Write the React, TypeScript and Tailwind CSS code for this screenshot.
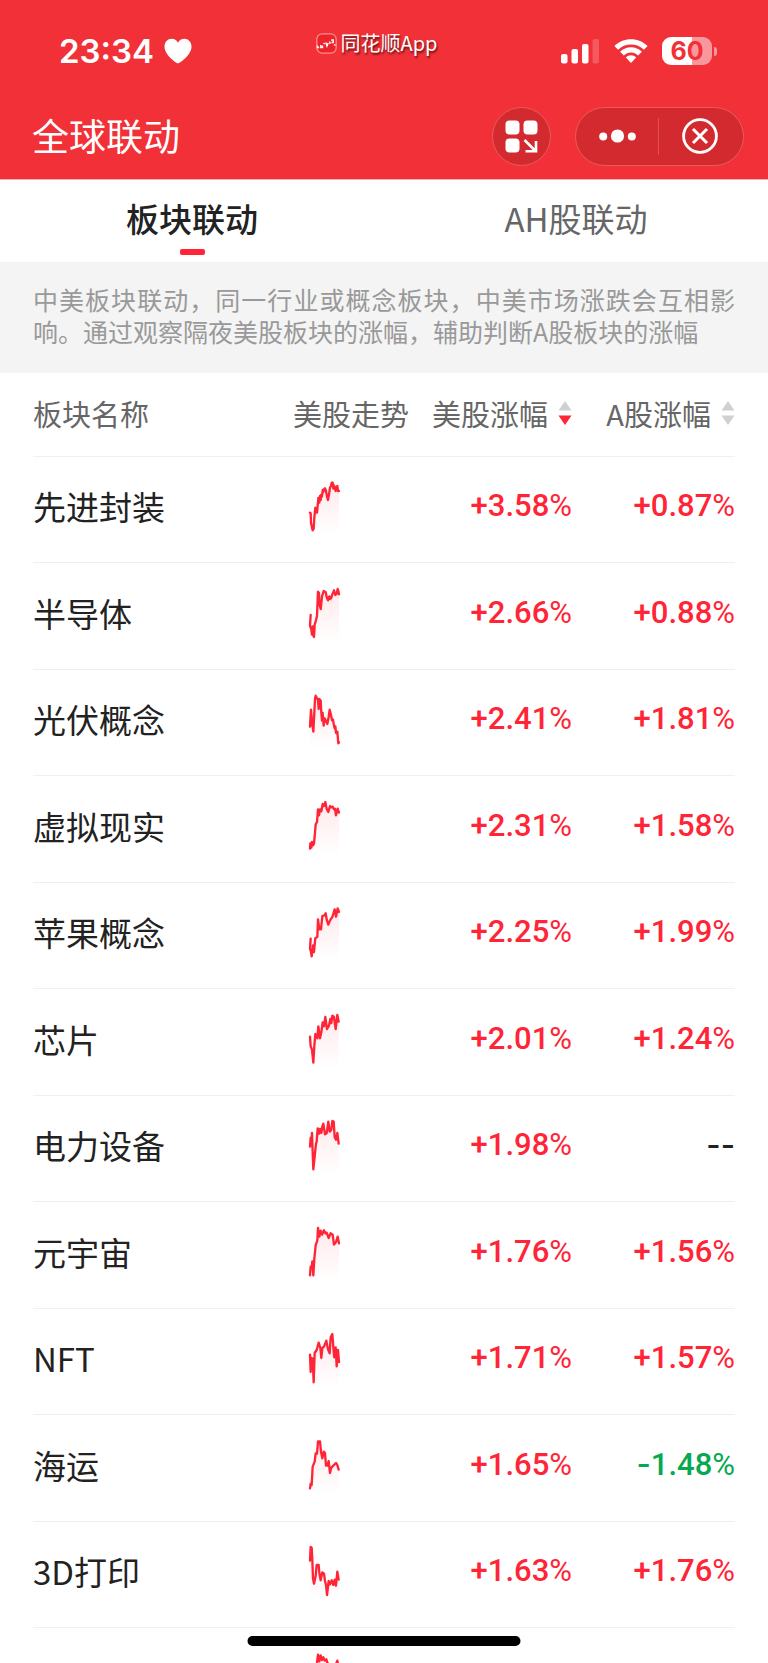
import React from 'react';
import clsx from 'clsx';

interface Sector {
  name: string;
  us: string;
  cn: string;
  trend: string;
}

const SECTORS: Sector[] = [
  {
    name: '先进封装',
    us: '+3.58%',
    cn: '+0.87%',
    trend: '6,110 8,112 9,140 12,155 14,163 17,158 19,125 22,95 24,98 27,110 29,90 31,66 34,80 36,60 38,72 40,56 42,62 44,42 46,48 48,40 51,37 54,45 57,62 60,72 63,55 66,35 69,30 71,20 74,20 76,38 78,28 81,38 83,45 86,32 88,30 90,45 93,45',
  },
  {
    name: '半导体',
    us: '+2.66%',
    cn: '+0.88%',
    trend: '8,96 6,128 10,140 12,155 14,130 16,158 18,162 20,125 24,112 27,98 30,26 33,30 34,60 38,78 40,60 42,40 47,24 53,28 56,42 60,52 64,40 67,48 70,44 73,34 78,22 82,36 86,32 89,18 91,24 93,34',
  },
  {
    name: '光伏概念',
    us: '+2.41%',
    cn: '+1.81%',
    trend: '6,113 9,62 12,100 16,128 19,70 21,30 23,20 26,26 30,33 32,60 34,30 38,35 40,72 42,95 44,72 47,110 50,88 54,96 58,105 62,84 65,62 69,78 72,94 75,92 78,110 80,118 82,112 84,132 88,128 91,163 93,160',
  },
  {
    name: '虚拟现实',
    us: '+2.31%',
    cn: '+1.58%',
    trend: '6,158 7,142 10,155 12,138 15,148 18,143 21,110 23,85 27,78 30,40 33,58 36,40 40,46 44,24 48,30 52,18 56,38 61,48 66,30 70,34 74,32 78,40 81,38 84,58 89,38 93,50',
  },
  {
    name: '苹果概念',
    us: '+2.25%',
    cn: '+1.99%',
    trend: '8,110 6,140 9,150 11,163 15,130 18,150 22,108 28,105 30,52 34,82 39,82 43,42 49,40 53,34 56,52 61,68 66,55 73,45 80,22 84,44 89,19 93,30',
  },
  {
    name: '芯片',
    us: '+2.01%',
    cn: '+1.24%',
    trend: '6,83 8,112 12,122 16,161 19,110 22,75 28,88 31,52 36,88 40,70 44,40 48,52 52,24 57,60 63,50 67,30 70,42 73,20 78,24 80,40 83,60 88,18 92,38',
  },
  {
    name: '电力设备',
    us: '+1.98%',
    cn: '--',
    trend: '6,95 8,68 10,85 12,54 14,110 16,163 20,125 24,86 26,80 29,40 33,56 36,42 40,54 43,34 46,26 51,58 56,55 61,20 65,50 70,44 73,18 77,20 80,66 84,74 88,54 92,86',
  },
  {
    name: '元宇宙',
    us: '+1.76%',
    cn: '+1.56%',
    trend: '6,160 8,134 11,138 13,118 16,160 19,110 23,70 28,55 30,18 34,44 38,26 42,38 48,25 52,34 56,32 62,48 68,34 74,38 78,68 84,60 89,44 93,64',
  },
  {
    name: 'NFT',
    us: '+1.71%',
    cn: '+1.57%',
    trend: '6,80 8,132 10,90 14,92 17,163 20,75 26,66 32,44 37,60 40,90 43,60 48,56 55,38 60,64 65,76 68,28 73,18 77,70 79,88 83,58 86,115 90,66 93,102',
  },
  {
    name: '海运',
    us: '+1.65%',
    cn: '-1.48%',
    trend: '6,160 8,146 11,150 14,95 20,80 23,55 27,56 30,19 36,19 39,50 43,70 47,50 51,54 54,92 58,92 62,78 66,114 70,98 76,92 84,84 88,90 92,104',
  },
  {
    name: '3D打印',
    us: '+1.63%',
    cn: '+1.76%',
    trend: '6,59 8,18 11,20 13,56 15,112 18,128 23,104 26,72 32,72 34,96 38,118 43,94 48,98 51,120 54,132 57,162 62,120 66,130 71,118 76,132 80,116 84,134 88,92 92,116',
  },
  {
    name: '',
    us: '',
    cn: '',
    trend: '6,100 16,130 22,80 27,44 30,20 34,40 38,22 42,36 46,28 50,38 55,34 58,44 70,60 80,60 88,38 93,60',
  },
];

const changeColor = (value: string) => {
  if (value.startsWith('+')) return 'text-[#ff2436]';
  if (value === '--') return 'text-[#222222]';
  return 'text-[#07a850]';
};

const Change: React.FC<{ value: string }> = ({ value }) => {
  const dashes = value.match(/^-+/)?.[0] ?? '';
  return (
    <span className={clsx("font-['Roboto',sans-serif] text-[31px] leading-9 font-medium", changeColor(value))}>
      {/* Roboto's hyphen is too short for a minus sign */}
      {dashes && <span className="font-['Inter',sans-serif]">{dashes}</span>}
      {value.slice(dashes.length).replace('%', '')}
      {value.endsWith('%') && <span className="font-normal">%</span>}
    </span>
  );
};

const Sparkline: React.FC<{ points: string }> = ({ points }) => (
  <svg viewBox="0 0 102 198" className="ml-[15px] block h-[66px] w-[34px]" aria-hidden="true">
    <defs>
      <linearGradient id="trend-fill" gradientUnits="userSpaceOnUse" x1="0" y1="18" x2="0" y2="176">
        <stop offset="0" stopColor="#ff2436" stopOpacity="0.1" />
        <stop offset="1" stopColor="#ff2436" stopOpacity="0" />
      </linearGradient>
    </defs>
    <polygon points={`6,176 ${points} 93,176`} fill="url(#trend-fill)" />
    <polyline
      points={points}
      fill="none"
      stroke="#ff2436"
      strokeWidth="7"
      strokeLinejoin="round"
      strokeLinecap="round"
    />
  </svg>
);

const SortArrows: React.FC<{ active?: boolean }> = ({ active }) => (
  <svg viewBox="0 0 14 26" className="h-[26px] w-[14px]" aria-hidden="true">
    <path d="M7 1 L13.5 10.5 H0.5 Z" fill="#d0d0d0" />
    <path d="M7 25 L13.5 15.5 H0.5 Z" fill={active ? '#ff2436' : '#d0d0d0'} />
  </svg>
);

const StatusBar: React.FC = () => (
  <div className="flex h-[102px] items-center justify-between pr-[51px] pl-[59px]">
    <div className="flex items-center gap-[10px]">
      <span className="font-['Inter',sans-serif] text-[33px] leading-10 font-semibold">23:34</span>
      <svg viewBox="0 0 28 26" className="h-[26px] w-7" aria-hidden="true">
        <path
          d="M14 25.5 C12.5 25.2 0.5 17.5 0.5 8.6 C0.5 4 3.8 0.8 7.6 0.8 C10.4 0.8 12.8 2.3 14 4.8 C15.2 2.3 17.6 0.8 20.4 0.8 C24.2 0.8 27.5 4 27.5 8.6 C27.5 17.5 15.5 25.2 14 25.5 Z"
          fill="#fff"
        />
      </svg>
    </div>

    <div className="mb-4 flex items-center gap-1">
      <svg viewBox="0 0 21 21" className="size-[21px]" aria-hidden="true">
        <rect x="0.8" y="0.8" width="19.4" height="19.4" rx="5.5" fill="#ee2229" stroke="#fa8f92" strokeWidth="1.3" />
        <path
          d="M1.5 12.5 V14.5 H3.2 M4.8 12 V14.5 H6.5 V12.5 M7.5 10 L8.8 11 M9.8 9.5 L11 13 L12.2 10 M13.5 8.5 L14.2 11 M15.2 7 H17.2 V9.5 H15.5 M18 11.5 L19.5 12.5"
          fill="none"
          stroke="#fff"
          strokeWidth="1.4"
        />
      </svg>
      <span className="text-[20px] leading-6 text-shadow-[1px_2px_2px_rgba(0,0,0,0.6)]">同花顺App</span>
    </div>

    <div className="flex items-center">
      <svg viewBox="0 0 39 25" className="h-[25px] w-[39px]" aria-hidden="true">
        <rect x="0" y="15" width="6.5" height="9.5" rx="2" fill="#fff" />
        <rect x="10.5" y="10" width="6.5" height="14.5" rx="2" fill="#fff" />
        <rect x="21" y="5" width="6.5" height="19.5" rx="2" fill="#fff" />
        <rect x="31.5" y="0" width="6.5" height="24.5" rx="2" fill="#fff" fillOpacity="0.2" />
      </svg>
      <svg viewBox="0 0 34 25" className="ml-[14px] h-[25px] w-[34px]" aria-hidden="true">
        <path d="M17 0.3 C23.5 0.3 29.3 2.8 33.6 7 L29.9 10.8 C26.5 7.5 22 5.6 17 5.6 C12 5.6 7.5 7.5 4.1 10.8 L0.4 7 C4.7 2.8 10.5 0.3 17 0.3 Z" fill="#fff" />
        <path d="M17 8.3 C21.2 8.3 25 9.9 27.9 12.7 L24.1 16.5 C22.2 14.7 19.8 13.6 17 13.6 C14.2 13.6 11.8 14.7 9.9 16.5 L6.1 12.7 C9 9.9 12.8 8.3 17 8.3 Z" fill="#fff" />
        <path d="M17 16.2 C19 16.2 20.8 17 22.1 18.4 L17 24 L11.9 18.4 C13.2 17 15 16.2 17 16.2 Z" fill="#fff" />
      </svg>
      <div className="ml-[14px] flex items-center gap-[2px]">
        <div className="flex h-7 w-[50px] items-center justify-center rounded-[9px] bg-linear-to-r from-white from-60% to-[#f9989c] to-60%">
          <span className="font-['Inter',sans-serif] text-[25px] leading-7 font-bold text-[#f23037]">60</span>
        </div>
        <div className="h-[9px] w-[3px] rounded-r-full bg-[#f9989c]" />
      </div>
    </div>
  </div>
);

const TitleBar: React.FC = () => (
  <div className="flex h-[68px] items-center justify-between pr-6 pl-8">
    <h1 className="pb-[2px] text-[37px] leading-[48px]">全球联动</h1>
    <div className="flex items-center gap-6">
      <button
        type="button"
        aria-label="小窗"
        className="flex size-[59px] items-center justify-center rounded-full border border-[#ea5a5f] bg-[#d32a2f]"
      >
        <svg viewBox="0 0 33 33" className="size-[33px]" aria-hidden="true">
          <rect x="0.5" y="0.5" width="14" height="14" rx="4" fill="#fff" />
          <rect x="18.5" y="0.5" width="14" height="14" rx="4" fill="#fff" />
          <rect x="0.5" y="18.5" width="14" height="14" rx="4" fill="#fff" />
          <path d="M19.5 20 L30.5 31 M31 21 V31.3 H20.5" fill="none" stroke="#fff" strokeWidth="2.6" />
        </svg>
      </button>
      <div className="flex h-[59px] w-[169px] items-center rounded-full border border-[#ea5a5f] bg-[#d32a2f]">
        <button type="button" aria-label="更多" className="flex h-full flex-1 items-center justify-center">
          <svg viewBox="0 0 37 14" className="h-[14px] w-[37px]" aria-hidden="true">
            <circle cx="4.2" cy="7.5" r="4" fill="#fff" />
            <circle cx="18.5" cy="7" r="6.6" fill="#fff" />
            <circle cx="32.8" cy="7.5" r="4" fill="#fff" />
          </svg>
        </button>
        <div className="h-[37px] w-px bg-[#e25054]" />
        <button type="button" aria-label="关闭" className="flex h-full flex-1 items-center justify-center pr-[2px]">
          <svg viewBox="0 0 36 36" className="size-9" aria-hidden="true">
            <circle cx="18" cy="18" r="16.4" fill="none" stroke="#fff" strokeWidth="2.8" />
            <path d="M11 11 L25 25 M25 11 L11 25" stroke="#fff" strokeWidth="3" />
          </svg>
        </button>
      </div>
    </div>
  </div>
);

export default function App() {
  return (
    <div className="flex h-screen flex-col overflow-hidden bg-white font-['Noto_Sans_CJK_SC',sans-serif] text-[#222222]">
      <header className="shrink-0 border-b border-[#f9b0b3] bg-[#f23037] pb-[9px] text-white">
        <StatusBar />
        <TitleBar />
      </header>

      {/* Tabs */}
      <nav className="grid h-[82px] shrink-0 grid-cols-2">
        <button type="button" className="flex flex-col items-center pt-[14px] text-[33px] leading-[48px] font-medium">
          板块联动
          <span className="mt-[7px] h-[6px] w-[25px] rounded-[2px] bg-[#ff2436]" />
        </button>
        <button type="button" className="flex flex-col items-center pt-[14px] text-[33px] leading-[48px] text-[#666666]">
          AH股联动
        </button>
      </nav>

      <p className="shrink-0 bg-[#f4f4f4] px-[33px] pt-[21px] pb-[26px] text-justify text-[25px] leading-8 text-[#999999]">
        中美板块联动，同一行业或概念板块，中美市场涨跌会互相影响。通过观察隔夜美股板块的涨幅，辅助判断A股板块的涨幅
      </p>

      <main className="min-h-0 flex-1 overflow-hidden px-[33px]">
        <table className="w-full table-fixed border-collapse">
          <thead>
            <tr className="h-[83px] border-b border-[#f0f0f0] text-[29px] leading-10 text-[#666666]">
              <th scope="col" className="pb-[2px] text-left font-normal">板块名称</th>
              <th scope="col" className="w-[113px] pb-[2px] text-left font-normal whitespace-nowrap">美股走势</th>
              <th scope="col" className="w-[166px] pb-[2px] font-normal">
                <button type="button" className="ml-auto flex items-center gap-[10px] whitespace-nowrap">
                  美股涨幅
                  <SortArrows active />
                </button>
              </th>
              <th scope="col" className="w-[163px] pb-[2px] font-normal">
                <button type="button" className="ml-auto flex items-center gap-[10px] whitespace-nowrap">
                  A股涨幅
                  <SortArrows />
                </button>
              </th>
            </tr>
          </thead>
          <tbody>
            {SECTORS.map((sector, index) => (
              <tr key={index} className="border-b border-[#f0f0f0] odd:h-[106px] even:h-[107px]">
                <td className="pb-[6px] text-[33px] leading-[48px]">{sector.name}</td>
                <td>
                  <Sparkline points={sector.trend} />
                </td>
                <td className="pb-[6px] text-right">
                  <Change value={sector.us} />
                </td>
                <td className="pb-[6px] text-right">
                  <Change value={sector.cn} />
                </td>
              </tr>
            ))}
          </tbody>
        </table>
      </main>

      {/* Home indicator */}
      <div className="fixed bottom-[17px] left-1/2 h-[10px] w-[273px] -translate-x-1/2 rounded-full bg-black" />
    </div>
  );
}
